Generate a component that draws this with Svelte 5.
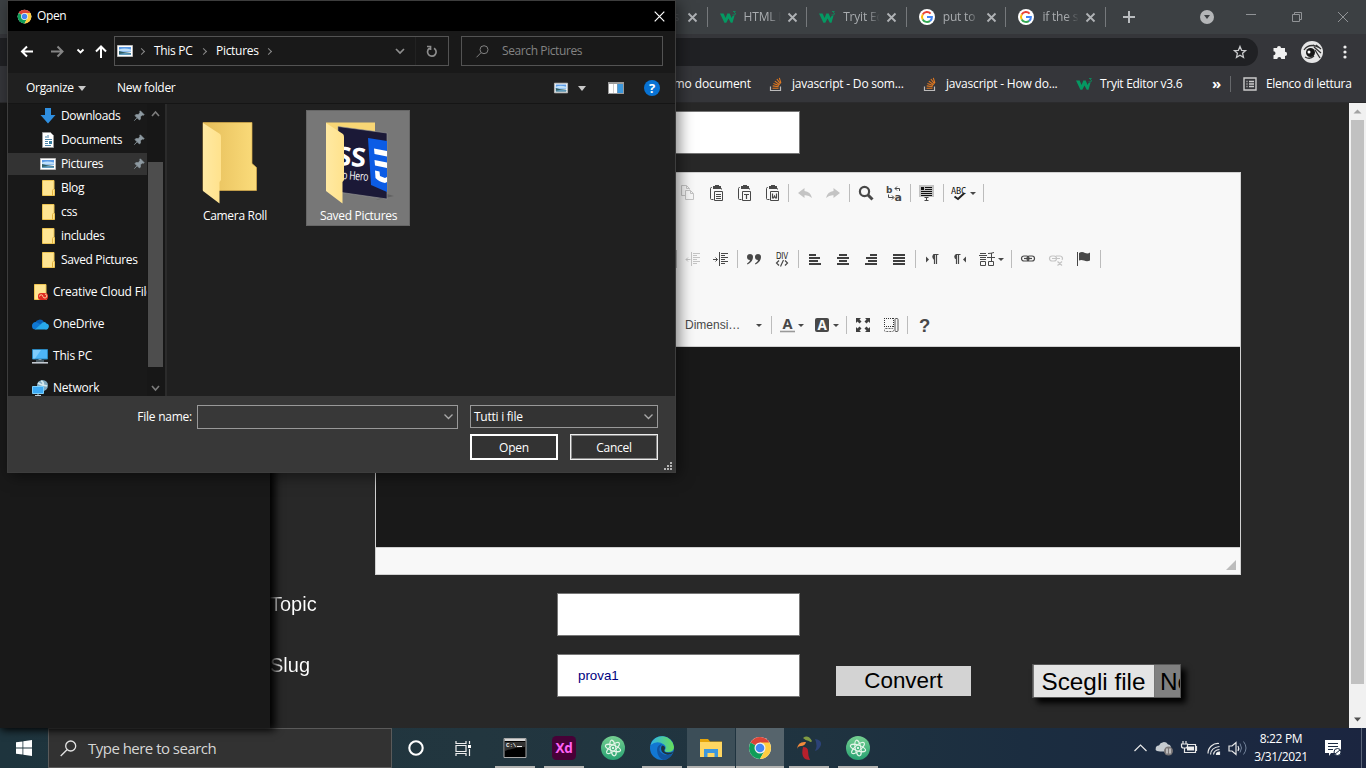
<script>
  const w3 = '<path d="M0 4.500h3.600l2 4.600 1.700-4.600h2.400l1.900 4.600 1-2.400h1.900l-2 7h-1.700L8.500 9.400l-2.200 4.300H4.400z" fill="#059862"/><path d="M13 2.500h2.300l-1 1.200q1.200 0 1.200 1.100-.2 1.300-1.500 1.300-1 0-1.200-.6" fill="none" stroke="#059862" stroke-width=".8"/>';
  const google = '<circle cx="8" cy="8" r="8" fill="#fff"/><path d="M11.600 4.600A5 5 0 0 0 3.700 5.500" stroke="#ea4335" stroke-width="2" fill="none"/><path d="M3.700 5.500a5 5 0 0 0 0 5" stroke="#fbbc05" stroke-width="2" fill="none"/><path d="M3.700 10.500a5 5 0 0 0 7.400 1.400" stroke="#34a853" stroke-width="2" fill="none"/><path d="M11.100 11.900A4.700 4.700 0 0 0 12.900 8H8" stroke="#4285f4" stroke-width="2" fill="none"/>';
  const stack = '<path d="M2.500 10.500v4h10v-4" stroke="#bcbbbb" stroke-width="1.200" fill="none"/><path d="M4.500 12.300h6M4.700 9.900l6 .8M5.400 7.500l5.600 2M6.800 5.100l4.900 3.700M8.900 3l3.600 4.900M11.300 1.800l1.600 5.200" stroke="#e07820" stroke-width="1.100"/>';
  const chrome = '<circle cx="12" cy="12" r="11" fill="#fff"/><path d="M12 12L2.500 6.500A11 11 0 0 1 21.500 6.500z" fill="#db4437"/><path d="M2.500 6.500A11 11 0 0 0 12 23l4.600-8.300L12 12z" fill="#0f9d58"/><path d="M21.500 6.500H12v5.500l4.700 2.700L12 23A11 11 0 0 0 21.500 6.500z" fill="#ffcd40"/><circle cx="12" cy="12" r="5.500" fill="#f1f1f1"/><circle cx="12" cy="12" r="4.300" fill="#4285f4"/>';
  const picture = '<path d="M.5 2.500h15v11H.5z" fill="#fff" stroke="#b9b9b9"/><path d="M2 4h12v5H2z" fill="#5b9be6"/><path d="M2 6.500q5-2 12 0v2H2z" fill="#bfe0fa"/><path d="M2 8l4 1 8 1v2H2z" fill="#2f5d64"/><path d="M2 11l6-1 6 .5V12H2z" fill="#5f9bbd"/>';
  const folder = '<path d="M2.500 .5h11.500v8l.5 1v6H2.500z" fill="#ffe592" stroke="#edc452"/><path d="M12.500 15.500v-5l1-1.500" fill="none" stroke="#e3b23c"/>';
  const pin = '<path d="M9.500 2L14 6.500l-1.200 .6-1-.3L9.500 9v2.800L8.300 12.500 3.500 7.700 4.200 6.500h2.800l2.200-2.300-.3-1zM5.800 10L2.500 13.500" fill="#8e9aa2" stroke="#8e9aa2" stroke-width="1"/>';
  const atom = '<defs><linearGradient id="ag" x2="0" y2="1"><stop stop-color="#75cf91"/><stop offset="1" stop-color="#27a172"/></linearGradient></defs><circle cx="12" cy="12" r="12" fill="url(#ag)"/><g fill="none" stroke="#e3f5e8" stroke-width="1.100"><ellipse cx="12" cy="12" rx="2.800" ry="8" transform="rotate(-12 12 12)"/><ellipse cx="12" cy="12" rx="2.800" ry="8" transform="rotate(50 12 12)"/><ellipse cx="12" cy="12" rx="2.800" ry="8" transform="rotate(108 12 12)"/></g><circle cx="12" cy="12" r="1.100" fill="#fff"/>';
  const clip = (c) => `<path d="M4 2.500H3.500q-1 0-1 1V13.500q0 1 1 1h2M11.500 2.500q2 0 2 2" fill="none" stroke="#484848"/><path d="M5 1h2V0h4v1h2v3H5z" fill="#484848"/><path d="M6.500 6.500h8v9h-8z" fill="#f8f8f8" stroke="#484848"/>${c}`;

  const icons = {
    copy: '<g fill="none" stroke="#c4c4c4"><path d="M5 10.500H1.500V.5h5l3 3v1M6.500 .5v3h3"/><path d="M5.500 5.500h5l3 3v6h-8zM10.500 5.500v3h3" fill="#f8f8f8"/></g>',
    paste: clip('<path d="M8 9.500h5M8 11.500h5M8 13.500h5" stroke="#484848"/>'),
    pasteT: clip('<path d="M8 9.500h5M10.500 9v5" stroke="#484848" stroke-width="1.200"/>'),
    pasteW: clip('<path d="M8.500 8.500v4.500h1l1-2 1 2h1V8.500" fill="none" stroke="#484848" stroke-width="1.200"/>'),
    undo: '<path d="M7.500 3L1 8l6.500 5V10.300q4-.5 7.500 2.700Q13.500 6.500 7.500 6z" fill="#c4c4c4"/>',
    redo: '<path d="M8.500 3L15 8l-6.500 5V10.300q-4-.5-7.500 2.700Q2.500 6.500 8.500 6z" fill="#c4c4c4"/>',
    find: '<circle cx="6.500" cy="6.500" r="4.600" fill="none" stroke="#484848" stroke-width="2.200"/><path d="M10 10l4.500 4.500" stroke="#484848" stroke-width="3"/>',
    replace: '<g font-family="DejaVu Sans" font-weight="bold" fill="#484848"><text x="0" y="7.500" font-size="9">b</text><text x="8.500" y="15.500" font-size="11">a</text></g><path d="M9 3.500h4.500v2.500M11 1.500l-2 2 2 2M2.500 9.500v3h5M6 10.500l2 2-2 2" stroke="#484848" fill="none"/>',
    selectall: '<path d="M0 0h15v12H0z" fill="#c3c3c3"/><path d="M2 2h3v3H2z" fill="#111"/><path d="M6 2.500h7M6 4.500h7M2 6.500h11M2 8.500h11M2 10.500h11" stroke="#111"/><path d="M5.500 12.500h4M7.500 12.500v3M5.500 15.500h4" stroke="#444"/>',
    spell: '<text x="0" y="8.500" font-family="DejaVu Sans Mono" font-size="9" textLength="15" lengthAdjust="spacingAndGlyphs" fill="#111">ABC</text><path d="M3.500 11.500l3.500 2.500 6.500-6" fill="none" stroke="#222" stroke-width="2"/>',
    outdent: '<path d="M6.500 1v14M8 2.500h7M8 4.500h4M8 6.500h7M8 8.500h4M8 10.500h7M8 12.500h4M1 8.500h4.500M3 6.500l-2 2 2 2" fill="none" stroke="#c4c4c4"/>',
    indent: '<path d="M6.500 1v14M8 2.500h7M8 4.500h4M8 6.500h7M8 8.500h4M8 10.500h7M8 12.500h4M0 8.500h4.500M2.500 6.500l2 2-2 2" fill="none" stroke="#484848"/>',
    quote: '<path d="M4 3a3 3 0 0 1 3 3q0 5-5.500 7.500l-.5-1Q4 10.500 4 9a3 3 0 0 1 0-6zM12 3a3 3 0 0 1 3 3q0 5-5.500 7.500l-.5-1Q12 10.500 12 9a3 3 0 0 1 0-6z" fill="#484848"/>',
    div: '<text x="2" y="7.500" font-family="DejaVu Sans" font-size="9" textLength="12" lengthAdjust="spacingAndGlyphs" fill="#222">DIV</text><path d="M5 9.500l-2.500 2.500L5 14.500M11 9.500l2.500 2.500-2.500 2.500M9.500 9l-3 6.500" fill="none" stroke="#484848" stroke-width="1.200"/>',
    left: '<path d="M2 4h7M2 7h11M2 10h9M2 13h12" stroke="#3f3f3f" stroke-width="2"/>',
    center: '<path d="M4 4h8M2 7h12M4 10h8M2 13h12" stroke="#3f3f3f" stroke-width="2"/>',
    right: '<path d="M7 4h7M3 7h11M5 10h9M2 13h12" stroke="#3f3f3f" stroke-width="2"/>',
    justify: '<path d="M2 4h12M2 7h12M2 10h12M2 13h12" stroke="#3f3f3f" stroke-width="2"/>',
    ltr: '<path d="M2 5.500l3 3-3 3z" fill="#484848"/><path d="M14.500 3.500H10v5M10.500 3v10M12.500 3v10" stroke="#484848" stroke-width="1.200" fill="none"/><path d="M10.500 3a2.800 2.800 0 0 0 0 5.500z" fill="#484848"/>',
    rtl: '<path d="M14 5.500l-3 3 3 3z" fill="#484848"/><path d="M8.500 3.500H5M4.500 3v10M6.500 3v10" stroke="#484848" stroke-width="1.200" fill="none"/><path d="M4.500 3a2.800 2.800 0 0 0 0 5.500z" fill="#484848"/>',
    lang: '<path d="M1 2.500h6M0 4.500h8M1 6.500h6M1 8.500h6M1.500 10.500h5v4h-5zM15 1.500q-3 1-6 1M8 6.500h8M12.500 2v8M9.500 10.500h5v4h-5z" fill="none" stroke="#484848"/>',
    link: '<g fill="none" stroke="#484848" stroke-width="1.200"><rect x="1.500" y="5" width="7.500" height="5" rx="2.500"/><rect x="7" y="5" width="7.500" height="5" rx="2.500"/><path d="M4 7.500h8"/></g>',
    unlink: '<g fill="none" stroke="#c4c4c4" stroke-width="1.200"><rect x="1.500" y="5" width="7" height="5" rx="2.500"/><path d="M8 5h4a2.500 2.500 0 0 1 2 4M4 7.500h8M9.500 10.500l4.500 4M14 10.500l-4.500 4"/></g>',
    flag: '<path d="M1.500 1v14" stroke="#484848"/><path d="M3 2q3-2 6 0 3 1 5-.5V9.500q-3 1.500-6 0-3-1-5 0z" fill="#484848"/>',
    color: '<text x="8.500" y="11.500" text-anchor="middle" font-family="Noto Sans" font-weight="bold" font-size="14.500" fill="#484848">A</text><path d="M1 14.500h15" stroke="#999" stroke-width="1.600"/>',
    bg: '<rect x="1" y="1" width="14" height="14" rx="2" fill="#484848"/><text x="8" y="12.700" text-anchor="middle" font-family="Noto Sans" font-weight="bold" font-size="13.500" fill="#f8f8f8">A</text>',
    max: '<path d="M1 1h5L4.500 2.500 6.500 4.500 4.500 6.500 2.500 4.500 1 6zM15 1v5l-1.500-1.500-2 2-2-2 2-2L10 1zM1 15v-5l1.500 1.500 2-2 2 2-2 2L6 15zM15 15h-5l1.500-1.500-2-2 2-2 2 2L15 10z" fill="#3f3f3f"/>',
    blocks: '<path d="M1 1.500h10M1 9.500h10M1.500 1v9M10.500 1v9" stroke="#333" stroke-dasharray="1 1"/><rect x="12" y="1.500" width="3" height="13" rx="1" fill="none" stroke="#555"/><rect x="1.500" y="11.500" width="9" height="3" rx="1" fill="none" stroke="#666" stroke-dasharray="2 1"/>',
    help: '<text x="8.500" y="14.500" text-anchor="middle" font-family="Liberation Sans" font-weight="bold" font-size="18.500" fill="#484848">?</text>',
    down: '<path d="M5 0h6v7h4.500L8 15.500.5 7H5z" fill="#2f8fe0"/>',
    doc: '<path d="M2.500 .5h8l3 3v12h-11z" fill="#fff" stroke="#999"/><path d="M5 5h2M8 3v3M5 7.500h7M5 9.500h3M5 11.500h3M5 13.500h6" stroke="#4a83a8"/><path d="M9 9h3v3H9z" fill="#397fa0"/>',
    picture, folder,
    cc: folder + '<rect x="6" y="9" width="10" height="7" rx="3" fill="#e02a20"/><path d="M7.500 12.500a1.700 1.700 0 1 1 3.400 0 2 2 0 1 0 2-2.500" stroke="#ffd5a0" fill="none"/>',
    onedrive: '<path d="M3 7a5 5 0 0 1 9-1l-4 4z" fill="#0a5fb3"/><path d="M0 10a3.500 3.500 0 0 1 5-3.500L10 9l-6 4.500H3.500A3.500 3.500 0 0 1 0 10z" fill="#0f78d4"/><path d="M9 8q3-3.500 5.500-.5A3 3 0 0 1 13 13.500H3z" fill="#28a8ea"/>',
    pc: '<path d="M.5 1.500h15v9.500H.5z" fill="#4eb5f7" stroke="#2a86bd"/><path d="M1 2h8L3 10.500H1z" fill="#7fccfb"/><path d="M6.500 11.500h3M4 13h8" stroke="#7f9fb0"/><path d="M0 14.800h16" stroke="#cdd3dc" stroke-width="1.500"/>',
    network: '<circle cx="10.500" cy="5.500" r="5.500" fill="#7fa9c0"/><path d="M9 1q3 1 2 4l4 1M6 3l4 2" stroke="#d5e9ee" fill="none" stroke-width="1.800"/><path d="M.5 6.500h11v7H.5z" fill="#3ca9f4" stroke="#7dd0fb"/><path d="M3 15.500h6M6 14v2" stroke="#bcd0dc"/>',
    chrome, w3, google, stack
  };

  const tabs = [
    ['', 'is'], ['w3', 'HTML E'], ['w3', 'Tryit Ed'], ['google', 'put to'], ['google', 'if the s']
  ];
  const marks = [['stack', 'javascript - Do som...'], ['stack', 'javascript - How do...'], ['w3', 'Tryit Editor v3.6']];
  const rows = [
    ['copy', 'paste', 'pasteT', 'pasteW', '|', 'undo', 'redo', '|', 'find', 'replace', '|', 'selectall', '|', 'spell+', '|'],
    ['|', 'outdent', 'indent', '|', 'quote', 'div', '|', 'left', 'center', 'right', 'justify', '|', 'ltr', 'rtl', 'lang+', '|', 'link', 'unlink', 'flag', '|'],
    ['combo', '|', 'color+', 'bg+', '|', 'max', 'blocks', '|', 'help']
  ];
  const quick = [
    ['down', 'Downloads', true], ['doc', 'Documents', true], ['picture', 'Pictures', true],
    ['folder', 'Blog'], ['folder', 'css'], ['folder', 'includes'], ['folder', 'Saved Pictures']
  ];
  const places = [['cc', 'Creative Cloud Files'], ['onedrive', 'OneDrive'], ['pc', 'This PC'], ['network', 'Network']];

  const apps = [
    { line: 1, art: '<path d="M1 2.500h22v19H1z" fill="#000" stroke="#a8a8a8"/><path d="M1.500 3h21v2h-21z" fill="#d8d8d8"/><path d="M2 6h20v5q-10 0-20 4z" fill="#333"/><text x="3" y="11" font-family="Liberation Mono" font-size="6" font-weight="bold" fill="#eee">C:\\</text><path d="M14 10.500h5" stroke="#eee"/>' },
    { line: 1, art: '<rect width="24" height="24" rx="4.500" fill="#470137"/><text x="12" y="16.700" text-anchor="middle" font-family="Open Sans" font-weight="bold" font-size="13.500" fill="#ff61f6">Xd</text>' },
    { line: 0, art: atom },
    { line: 1, art: '<defs><linearGradient id="e1"><stop stop-color="#2fb4e8"/><stop offset="1" stop-color="#68df57"/></linearGradient></defs><circle cx="12" cy="12" r="12" fill="#1277d2"/><path d="M.5 9A12 12 0 0 1 24 11q0 5-6 5-4 0-3-2 2-3-1-5.500Q7 4 .5 9z" fill="url(#e1)"/><path d="M7 14q0-5 5-6-6 7 2 10.500 5 1.500 8.500-1.500-3 6.500-9 7-6-2-6.500-10z" fill="#11549f"/><path d="M12 9.500q3 0 3 2.500 0 1-.7 2-.8 2.500 4.200 2.800 3 0 4.700-1.300l-1 2q-4 2-7 .5-5-2-4-7z" fill="#20333c"/>' },
    { line: 2, art: '<path d="M1 3h8l2 2.500h12V8H1z" fill="#e5a50a"/><path d="M1 6h22v15H1z" fill="#ffd661"/><path d="M5 21v-8h14v8h-3.500v-4h-7v4z" fill="#3d97dd"/>' },
    { line: 2, hot: true, art: chrome },
    { line: 1, art: '<path d="M6 2q5-4 9 3-1 2-3 0-3 0-6-3z" fill="#829c43"/><path d="M18 3q7 1 6 6-2 5-6 6 3-5 0-12z" fill="#2c4277"/><path d="M0 13q1-8 9-7-1 4-5 4-3 0-4 3z" fill="#f08a3c"/><path d="M6 11q5 0 5 4 0 5 2 9Q3 24 6 11z" fill="#b7202c"/>' },
    { line: 1, art: atom }
  ];
</script>

{#snippet ico(name, size = 16)}
  <svg width={size} height={size} viewBox={name === 'chrome' ? '0 0 24 24' : '0 0 16 16'}>{@html icons[name]}</svg>
{/snippet}

<div class="desktop">
  <div class="browser">
    <div class="tabs">
      {#each tabs as [icon, label]}
        <div class="tab" class:plain={!icon}>
          <i class="fav">{#if icon}{@render ico(icon)}{/if}</i>
          <span class="tabtext">{label}</span>
          <svg class="x" width="9" height="9"><path d="M.5 .5l8 8M8.500 .5l-8 8" stroke="#b0b3b6" stroke-width="1.800" /></svg>
        </div>
      {/each}
      <svg class="plus" width="12" height="12"><path d="M6 0v12M0 6h12" stroke="#b9bcbf" stroke-width="2" /></svg>
      <svg class="drop" width="14" height="14"><circle cx="7" cy="7" r="7" fill="#b4b6b8" /><path d="M4 5h6l-3 4z" fill="#3c4043" /></svg>
      <svg class="win" width="102" height="14" fill="none" stroke="#909396"><path d="M0 4.500h10M46.500 4.500h7v7h-7zM48.500 4.500v-2h7v7h-2M92 2l10 10M102 2l-10 10" /></svg>
    </div>
    <div class="toolbar">
      <div class="address">
        <svg width="14" height="14" viewBox="0 0 14 14"><path d="M7 1.500l1.600 3.800 4 .3-3 2.700.9 4L7 10.200l-3.500 2.100.9-4-3-2.700 4-.3z" fill="none" stroke="#c9cacc" stroke-width="1.300" /></svg>
      </div>
      <svg class="puzzle" width="16" height="16"><path d="M1.500 4H5a2 2 0 1 1 4 0h4v3.800a2 2 0 1 1 0 4.200v3H9.300a2 2 0 1 0-4 0H1.500v-3.800a2 2 0 1 0 0-4z" fill="#f1f1f1" /></svg>
      <svg class="avatar" width="22" height="22"><circle cx="11" cy="11" r="11" fill="#e6e6e6" /><path d="M3 9q4-6 12-4M4 16q5 3 9-1M12 4l7 3M13 6l7 6M14 9l5 8M15 4l5 4" fill="none" stroke="#333" stroke-width="1.300" /><circle cx="9.500" cy="11.500" r="4.500" fill="#161616" /><circle cx="8" cy="11" r="1.500" fill="#fff" /></svg>
      <svg class="dots" width="4" height="14" fill="#ededed"><circle cx="2" cy="2" r="1.600" /><circle cx="2" cy="7" r="1.600" /><circle cx="2" cy="12" r="1.600" /></svg>
    </div>
    <div class="marks">
      <span class="first">demo document</span>
      {#each marks as [icon, label]}
        <div class="mark">{@render ico(icon)}<span>{label}</span></div>
      {/each}
      <span class="more">»</span>
      <svg class="list" width="14" height="14" fill="none" stroke="#ccc"><path d="M1 1h12v12H1zM3.500 4.500h1M6 4.500h5M3.500 7h1M6 7h5M3.500 9.500h1M6 9.500h5" stroke-width="1.400" /></svg>
      <span class="reading">Elenco di lettura</span>
    </div>
    <div class="page">
      <aside></aside>
      <main>
        <div class="row top"><div class="input"></div></div>
        <div class="editor">
          <div class="tools">
            {#each rows as row}
              <div class="toolrow">
                {#each row as item}
                  {#if item === '|'}
                    <i class="sep"></i>
                  {:else if item === 'combo'}
                    <div class="combo"><span>Dimensi…</span><i class="caret"></i></div>
                  {:else}
                    <div class="btn" class:wide={item.endsWith('+')}>
                      {@render ico(item.replace('+', ''))}
                      {#if item.endsWith('+')}<i class="caret"></i>{/if}
                    </div>
                  {/if}
                {/each}
              </div>
            {/each}
          </div>
          <div class="canvas"></div>
          <div class="foot"><svg width="10" height="10"><path d="M10 0v10H0z" fill="#bcbcbc" /></svg></div>
        </div>
        <div class="row topic"><span class="label">Topic</span><div class="input"></div></div>
        <div class="row slug">
          <span class="label">Slug</span><div class="input">prova1</div>
          <div class="convert">Convert</div>
          <div class="file"><span class="choose">Scegli file</span><span class="none">No</span></div>
        </div>
      </main>
      <div class="scroll">
        <svg width="17" height="17"><path d="M4.500 10.500h8l-4-4z" fill="#a3a3a3" /></svg>
        <div class="thumb"></div>
        <svg width="17" height="17"><path d="M5 6.500h7l-3.500 4z" fill="#505050" /></svg>
      </div>
    </div>
  </div>

  <div class="taskbar">
    <div class="start"><svg width="16" height="16" fill="#fff"><path d="M0 2.300l6.500-.9v6.200H0zM7.300 1.300L16 0v7.600H7.300zM0 8.400h6.500v6.200L0 13.700zM7.300 8.400H16V16l-8.700-1.200z" /></svg></div>
    <div class="search">
      <svg width="17" height="17" fill="none" stroke="#e4e4e4" stroke-width="1.300"><circle cx="10.700" cy="6" r="5" /><path d="M7 9.700L.7 16" /></svg>
      <span>Type here to search</span>
    </div>
    <div class="sys"><svg width="16" height="16"><circle cx="8" cy="8" r="6.700" fill="none" stroke="#fff" stroke-width="2.100" /></svg></div>
    <div class="sys view"><svg width="17" height="15" fill="none" stroke="#eee" stroke-width="1.200"><path d="M1 0v2.500h10V0M1 4.500h10v6H1zM1 15v-2.500h10V15M14.500 0v3M14.500 8v7" /><path d="M13 4h3v3h-3z" fill="#fff" stroke="none" /></svg></div>
    {#each apps as app}
      <div class="app" class:open={app.line === 1} class:full={app.line === 2} class:hot={app.hot}>
        <svg width="24" height="24">{@html app.art}</svg>
      </div>
    {/each}
    <div class="tray">
      <svg width="106" height="18" fill="none" stroke="#e8e8e8" stroke-width="1.200">
        <path d="M.5 12L6.500 6l6 6" />
        <path d="M23 12a3 3 0 0 1 2-5.500 5 5 0 0 1 9-1q3 0 3 4l-5 3h-6z" fill="#c7ccd1" stroke="none" />
        <circle cx="34.500" cy="12" r="4.500" fill="#7b7778" stroke="none" /><path d="M33 9.500v5M36 9.500v5" />
        <path d="M49 2v3M52 2v3M47.500 5h6v2q0 2-2 2h-2q-2 0-2-2zM50.500 9v4.500h9" /><path d="M54 5.500h7.500v8H52" /><path d="M53 7.500h7v4h-7z" fill="#eee" stroke="none" /><path d="M62.500 7v5" />
        <path d="M74 14.500A10 10 0 0 1 85 4.500M76.500 15.500q.5-7 9-8M79.500 15.500q.5-4.500 6-5" /><path d="M82.500 15.500q0-2.500 3-2.500v2.500z" fill="#fff" />
        <path d="M95 7h3l4-3.500v12L98 12h-3zM104 7q1.500 2.500 0 5" />
      </svg>
      <svg class="wave" width="8" height="14" fill="none" stroke="#73839a"><path d="M0 2.500q3 4.500 0 9M3.500 .5q5 6.500 0 13" /></svg>
    </div>
    <div class="clock"><span>8:22 PM</span><span>3/31/2021</span></div>
    <svg class="note" width="17" height="16"><path d="M0 0h16v13H6l-2 3v-3H0z" fill="#fff" /><path d="M3 3.500h10M3 6.500h10M3 9.500h5" stroke="#1c2b43" /><circle cx="12.500" cy="12" r="3.500" fill="#fff" stroke="#1c2b43" /><path d="M10 14l5-4" stroke="#1c2b43" /></svg>
    <i class="peek"></i>
  </div>

  <div class="dialog">
    <div class="title">{@render ico('chrome', 15)}<span>Open</span><svg class="close" width="11" height="11"><path d="M.7 .7l9.600 9.600M10.300 .7L.7 10.300" stroke="#fff" stroke-width="1.200" /></svg></div>
    <div class="nav">
      <svg class="arrows" width="88" height="16" fill="none" stroke="#fff" stroke-width="2">
        <path d="M7 3.500L2 8.500l5 5M2 8.500h11" /><path d="M37.500 3.500l5 5-5 5M42 8.500H31" stroke="#858585" /><path d="M57.500 6.500l3 3 3-3" stroke-width="1.800" /><path d="M76 8.500l5-5 5 5M81 4v11" />
      </svg>
      <div class="crumbs">
        {@render ico('picture')}
        <span class="chev"></span><span class="pc">This PC</span><span class="chev"></span><span class="pics">Pictures</span><span class="chev"></span>
        <svg class="v" width="10" height="6"><path d="M1 1l4 4 4-4" fill="none" stroke="#8e8e8e" stroke-width="1.700" /></svg>
        <div class="refresh"><svg width="12" height="13" fill="none" stroke="#8d8d8d" stroke-width="1.700"><path d="M8 3.200a4.300 4.300 0 1 1-4.500 .1M1 1.500h3.500V5" /></svg></div>
      </div>
      <div class="find"><svg width="13" height="13" fill="none" stroke="#808080"><circle cx="8" cy="4.700" r="4" /><path d="M5 7.700L.5 12.300" /></svg><span>Search Pictures</span></div>
    </div>
    <div class="commands">
      <span class="organize">Organize</span><i class="tri"></i><span class="newf">New folder</span>
      <span class="pushed"></span>
      {@render ico('picture', 14)}<i class="tri second"></i>
      <svg class="pane" width="16" height="12"><path d="M0 0h16v12H0z" fill="#9b9b9b" /><path d="M1 2h4v9H1zM5.500 2H9v9H5.500z" fill="#fff" /><path d="M9.500 2H15v9H9.500z" fill="#3d98dc" /></svg>
      <svg width="16" height="16"><circle cx="8" cy="8" r="8" fill="#0873d4" /><text x="8" y="12.500" text-anchor="middle" font-family="Open Sans" font-size="13" font-weight="bold" fill="#fff">?</text></svg>
    </div>
    <div class="body">
      <div class="tree">
        {#each quick as [icon, label, pinned]}
          <div class="node" class:sel={label === 'Pictures'}>{@render ico(icon)}<span>{label}</span>
            {#if pinned}<svg class="pin" width="12" height="12" viewBox="1 1 14 14">{@html pin}</svg>{/if}
          </div>
        {/each}
        {#each places as [icon, label]}
          <div class="node place">{@render ico(icon)}<span>{label}</span></div>
        {/each}
      </div>
      <div class="treebar">
        <svg width="9" height="6"><path d="M1 5l3.500-4L8 5" fill="none" stroke="#7c7c7c" stroke-width="1.600" /></svg>
        <div class="grip"></div>
        <svg width="9" height="6"><path d="M1 1l3.500 4L8 1" fill="none" stroke="#7c7c7c" stroke-width="1.600" /></svg>
      </div>
      <div class="files">
        <div class="tile">
          <svg width="104" height="94"><defs><linearGradient id="fb"><stop stop-color="#e5bd59" /><stop offset="1" stop-color="#fbdc7b" /></linearGradient><linearGradient id="ff" x2="1"><stop stop-color="#ffe9a2" /><stop offset="1" stop-color="#ffe28d" /></linearGradient></defs>
            <path d="M20 12.500h49v41l4.500 4v23H20z" fill="url(#fb)" stroke="#d9ad4c" stroke-width=".7" /><path d="M20 13l17 11q1 1 1 3v43l-1.500 2v21.500L20 81z" fill="url(#ff)" /></svg>
          <span>Camera Roll</span>
        </div>
        <div class="tile sel">
          <svg width="104" height="94">
            <path d="M20 12.500h49v42H20z" fill="#f8d675" /><path d="M70 90l18-4-7-2z" fill="#626262" />
            <path d="M32 16.500l49 6.500v66l-49-7z" fill="#1b1937" stroke="#999" stroke-width=".6" />
            <text x="30" y="55" font-family="Open Sans" font-size="26" font-weight="bold" fill="#fff" textLength="29" lengthAdjust="spacingAndGlyphs" transform="rotate(4 30 55)">SS</text>
            <text x="36" y="69" font-family="Open Sans" font-size="12" fill="#fff" textLength="26" lengthAdjust="spacingAndGlyphs" transform="rotate(4 36 69)">o Hero</text>
            <path d="M62 28l19 3v51l-16-7z" fill="#0c5ce5" /><path d="M68 38.500l13 2.500v5.500l-12.500-2.500zM68.500 50l12.500 2.500v5.500l-12-2.500zM69 60.500l4.500 1 .5 4.500 5 2 2-1v5l-2 1q-6-1-9.500-5z" fill="#fff" />
            <path d="M20 13l17 11q1 1 1 3v43l-1.500 2v21.500L20 81z" fill="url(#ff)" />
          </svg>
          <span>Saved Pictures</span>
        </div>
      </div>
    </div>
    <div class="footer">
      <div class="line">
        <span class="fname">File name:</span>
        <div class="field"><svg width="9" height="6"><path d="M.5 .5l4 4 4-4" fill="none" stroke="#aaa" stroke-width="1.300" /></svg></div>
        <div class="field type"><span>Tutti i file</span><svg width="9" height="6"><path d="M.5 .5l4 4 4-4" fill="none" stroke="#aaa" stroke-width="1.300" /></svg></div>
      </div>
      <div class="line buttons"><div class="button primary">Open</div><div class="button">Cancel</div></div>
      <svg class="gripper" width="8" height="8" fill="#b5b5b5"><path d="M6 0h2v2H6zM3 3h2v2H3zM6 3h2v2H6zM0 6h2v2H0zM3 6h2v2H3zM6 6h2v2H6z" /></svg>
    </div>
  </div>
</div>

<style>
  :global(body) { margin: 0; background: #282828; }
  * { box-sizing: border-box; }
  svg { display: block; flex: none; overflow: visible; }
  .desktop { position: relative; width: 1366px; height: 768px; overflow: hidden; display: flex; flex-direction: column; font: 12px/16px "Open Sans", sans-serif; letter-spacing: -0.2px; color: #fff; white-space: nowrap; }
  .browser { flex: 1; display: flex; flex-direction: column; min-height: 0; }
  .tabs { height: 34px; background: #3c4043; display: flex; align-items: center; padding-left: 608px; }
  .tab { width: 99.600px; height: 20px; display: flex; align-items: center; border-right: 1px solid #76797c; padding-left: 12px; flex: none; }
  .fav { width: 16px; height: 16px; margin-right: 8px; }
  .tabtext { width: 44px; color: #a9acaf; -webkit-mask-image: linear-gradient(90deg, #000 55%, transparent 84%); mask-image: linear-gradient(90deg, #000 55%, transparent 84%); }
  .plain .tabtext { padding-left: 27px; opacity: .7; }
  .plus { margin-left: 17px; }
  .drop { margin-left: 65px; }
  .win { margin-left: 32px; }
  .toolbar { height: 35px; background: #35363a; display: flex; align-items: center; }
  .address { width: 1258px; height: 28px; background: #202124; border-radius: 0 14px 14px 0; display: flex; align-items: center; justify-content: flex-end; padding-right: 11px; }
  .puzzle { margin-left: 14px; }
  .avatar { margin-left: 13px; }
  .dots { margin-left: 20px; }
  .marks { position: relative; z-index: 1; height: 34px; background: #35363a; display: flex; align-items: center; padding-bottom: 3px; padding-left: 608px; border-bottom: 1px solid #2b2b2d; }
  .first { width: 143px; text-align: right; margin-right: 17px; flex: none; letter-spacing: -0.1px; }
  .mark { width: 154px; flex: none; display: flex; align-items: center; gap: 8px; }
  .mark:nth-of-type(3) { letter-spacing: -0.3px; }
  .more { width: 19px; height: 16px; font-size: 15px; line-height: 14px; margin-left: -18px; font-weight: bold; border-right: 1px solid #66686b; flex: none; }
  .list { margin-left: 12px; }
  .reading { margin-left: 9px; letter-spacing: -0.3px; }
  .page { flex: 1; display: flex; background: #282828; min-height: 0; }
  aside { position: relative; width: 270px; background: #191919; box-shadow: 3px 0 8px 2px #000; }
  main { flex: 1; }
  .row { display: flex; align-items: flex-start; }
  .row.top { padding: 8px 0 0 287px; height: 69px; }
  .input { width: 243px; height: 43px; background: #fff; border: 1px solid #767676; color: #000080; font: 13.330px/41px "Liberation Sans", sans-serif; padding-left: 20px; letter-spacing: 0; }
  .editor { width: 866px; height: 403px; margin-left: 105px; border: 1px solid #d1d1d1; display: flex; flex-direction: column; }
  .tools { height: 174px; background: #f8f8f8; border-bottom: 1px solid #d1d1d1; }
  .toolrow { height: 66px; display: flex; align-items: flex-start; padding: 12px 0 0 298px; }
  .btn { width: 28px; height: 16px; padding-left: 6px; display: flex; align-items: center; }
  .btn.wide { width: 35px; padding-left: 5px; }
  .caret { border: 3px solid transparent; border-top-color: #484848; border-bottom: 0; }
  .btn .caret { margin-left: 3px; }
  .sep { width: 5px; height: 18px; background: linear-gradient(#bcbcbc, #bcbcbc) 2px 0 / 1px 18px no-repeat; margin-top: -1px; }
  .combo { width: 95px; height: 16px; padding-left: 11px; display: flex; align-items: center; color: #484848; font: 12px/16px "Liberation Sans", sans-serif; letter-spacing: 0; }
  .combo span { width: 71px; }
  .canvas { flex: 1; background: #191919; }
  .foot { height: 27px; background: #f8f8f8; border-top: 1px solid #d1d1d1; display: flex; align-items: flex-end; justify-content: flex-end; padding: 0 4px 4px; }
  .label { width: 287px; font: 20px/22px "Liberation Sans", sans-serif; letter-spacing: 0; background: linear-gradient(90deg, #b4b4b4, #fff 14px); -webkit-background-clip: text; background-clip: text; color: transparent; }
  .topic { padding-top: 18px; height: 79px; }
  .slug { height: 60px; }
  .convert { width: 135px; height: 30px; margin: 12px 0 0 36px; background: #d3d3d3; color: #000; text-align: center; font: 22.400px/29px "Liberation Sans", sans-serif; letter-spacing: 0; }
  .file { width: 149px; height: 34px; margin: 10px 0 0 61px; border: 1px solid #555; background: #808080; color: #000; overflow: hidden; box-shadow: 5px 5px 6px #000; display: flex; font: 24.300px/33px "Liberation Sans", sans-serif; letter-spacing: 0; }
  .choose { flex: none; width: 122px; background: #e4e4e4; text-align: center; border-right: 1px solid #777; border-left: 1px solid #777; padding-right: 1px; }
  .none { padding-left: 5px; }
  .scroll { width: 17px; background: #f1f1f1; display: flex; flex-direction: column; }
  .thumb { height: 564px; margin: 0 2px; background: #c1c1c1; }
  .scroll svg:last-child { margin-top: auto; }

  .taskbar { height: 40px; display: flex; background: linear-gradient(90deg, #1e343d, #22363f 35%, #1f3340 60%, #1b2d40 75%, #1b2540); }
  .taskbar > * { flex: none; }
  .start { width: 48px; display: flex; align-items: center; justify-content: center; }
  .search { width: 344px; background: #323232; border: 1px solid #5a5a5a; display: flex; align-items: center; padding-left: 11px; gap: 11px; font-size: 15px; color: #d6d6d6; letter-spacing: -0.52px; }
  .sys { width: 48px; display: flex; align-items: center; justify-content: center; }
  .view { width: 51px; padding-right: 4px; }
  .app { width: 48px; margin-right: 1px; display: flex; align-items: center; justify-content: center; }
  .app.open { background: linear-gradient(#b4b4b2, #b4b4b2) 4px 100% / 40px 2px no-repeat; }
  .app.full { background-color: #3c4e58; border-bottom: 2px solid #b4b4b2; padding-top: 2px; }
  .app.hot { background-color: #56646c; }
  .tray { display: flex; align-items: center; margin-left: 251px; }
  .clock { width: 76px; margin-left: -5px; padding-top: 2px; display: flex; flex-direction: column; align-items: center; line-height: 18px; letter-spacing: -0.35px; }
  .note { margin: 12px 0 0 6px; }
  .peek { margin-left: 19px; width: 1px; background: #5b6579; }

  .dialog { position: absolute; z-index: 2; left: 7px; top: 0; width: 669px; height: 473px; border: 1px solid #3d3d3d; box-shadow: 3px 3px 14px rgba(0, 0, 0, .5); background: #202020; display: flex; flex-direction: column; }
  .title { height: 30px; background: #000; display: flex; align-items: center; padding: 0 10px 0 9px; gap: 5px; letter-spacing: -0.4px; }
  .title .close { margin-left: auto; }
  .nav { height: 42px; background: #191919; display: flex; align-items: center; padding-left: 12px; padding-bottom: 2px; }
  .crumbs { margin-left: 6px; width: 335px; height: 30px; border: 1px solid #535353; display: flex; align-items: center; padding-left: 2px; letter-spacing: -0.3px; }
  .chev { width: 5px; height: 5px; border: solid #8a8a8a; border-width: 1.500px 1.500px 0 0; transform: rotate(45deg); margin: 0 10px 0 6px; }
  .pc { width: 40px; }
  .pics { width: 43px; }
  .pc + .chev { margin-left: 7px; }
  .pics + .chev { margin-left: 7px; }
  .v { margin-left: auto; }
  .refresh { margin-left: 10px; width: 33px; height: 28px; border-left: 1px solid #222; display: flex; align-items: center; justify-content: center; }
  .find { margin-left: 12px; width: 202px; height: 30px; border: 1px solid #535353; display: flex; align-items: center; padding-left: 14px; gap: 13px; color: #838383; letter-spacing: -0.4px; }
  .commands { height: 31px; display: flex; align-items: center; padding: 0 0 0 18px; border-bottom: 1px solid #151515; letter-spacing: -0.3px; }
  .organize { width: 49px; }
  .tri { border: 4px solid transparent; border-top: 5px solid #c9c9c9; border-bottom: 0; margin-left: 3px; }
  .newf { margin-left: 31px; }
  .pushed { margin-left: auto; }
  .tri.second { margin: 0 22px 0 10px; }
  .pane { margin-right: 20px; }
  .commands svg:last-child { margin-right: 15px; }
  .body { flex: 1; display: flex; min-height: 0; }
  .tree { width: 139px; flex: none; background: #191919; overflow: hidden; letter-spacing: -0.35px; }
  .node { height: 24px; display: flex; align-items: center; padding-left: 32px; gap: 5px; }
  .node.sel { height: 22px; margin: 1px 0; background: #333; }
  .node span { flex: none; }
  .pin { margin-left: auto; margin-right: 2px; }
  .place { margin-top: 8px; padding-left: 24px; letter-spacing: -0.2px; }
  .treebar { width: 20px; flex: none; background: #171717; border-right: 2px solid #2b2b2b; display: flex; flex-direction: column; align-items: center; padding: 7px 2px 5px 0; }
  .grip { width: 15px; height: 205px; margin: 45px 0 auto; background: #4d4d4d; }
  .files { display: flex; padding: 6px 0 0 16px; gap: 19px; letter-spacing: -0.3px; }
  .tile { width: 104px; height: 116px; display: flex; flex-direction: column; text-align: center; }
  .tile span { margin-top: 4px; }
  .tile.sel { background: #777; box-shadow: inset 0 0 0 1px #666; margin-left: -.5px; }
  .tile.sel span { padding-left: 2px; }
  .footer { height: 76px; background: #383838; padding-top: 9px; position: relative; letter-spacing: -0.25px; }
  .line { display: flex; align-items: flex-start; }
  .fname { width: 184px; text-align: right; padding-top: 4px; }
  .field { width: 261px; height: 24px; margin-left: 5px; border: 1px solid #999; background: #383838; display: flex; align-items: center; justify-content: flex-end; padding-right: 4px; }
  .field.type { width: 188px; height: 23px; margin-left: 12px; background: #333; justify-content: space-between; padding-left: 3px; }
  .buttons { padding: 5px 0 0 462px; gap: 12px; }
  .button { width: 88px; height: 26px; background: #333; border: 1px solid #eee; box-shadow: inset 0 0 0 1px #888; text-align: center; line-height: 25px; }
  .primary { border: 2px solid #fff; box-shadow: none; line-height: 23px; }
  .gripper { position: absolute; right: 3px; bottom: 2px; }
</style>
